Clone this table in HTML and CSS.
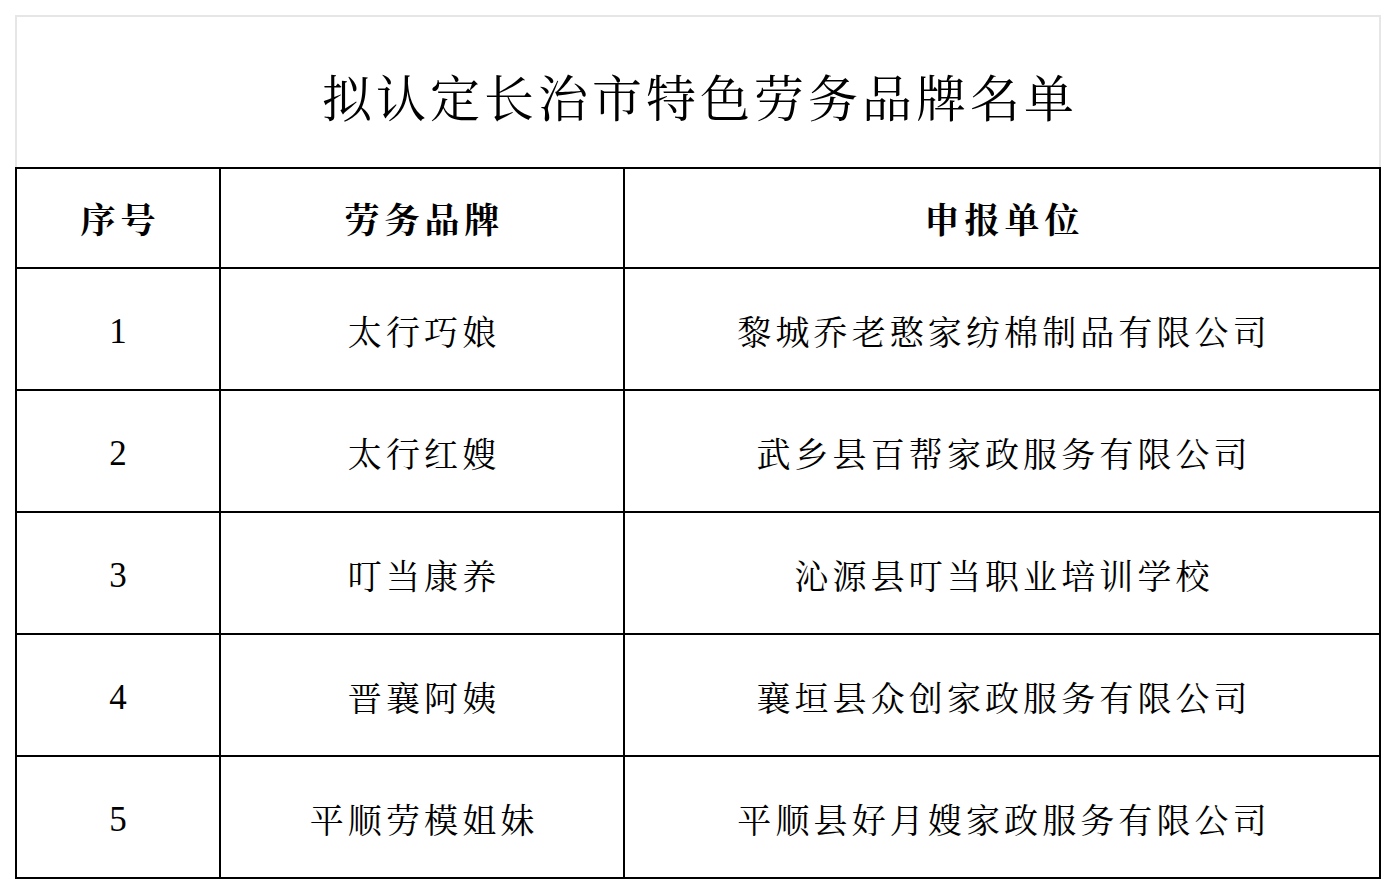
FILE: index.html
```html
<!DOCTYPE html>
<html lang="zh-CN">
<head>
<meta charset="utf-8">
<title>拟认定长治市特色劳务品牌名单</title>
<link rel="stylesheet" href="styles.css">
</head>
<body>
<div class="sheet">
  <div class="title"><span class="title-text">拟认定长治市特色劳务品牌名单</span></div>
  <div class="grid">
    <div class="cell head"><span class="ht">序号</span></div>
    <div class="cell head"><span class="ht">劳务品牌</span></div>
    <div class="cell head"><span class="ht">申报单位</span></div>

    <div class="cell num">1</div>
    <div class="cell"><span class="dt">太行巧娘</span></div>
    <div class="cell"><span class="dt">黎城乔老憨家纺棉制品有限公司</span></div>

    <div class="cell num">2</div>
    <div class="cell"><span class="dt">太行红嫂</span></div>
    <div class="cell"><span class="dt">武乡县百帮家政服务有限公司</span></div>

    <div class="cell num">3</div>
    <div class="cell"><span class="dt">叮当康养</span></div>
    <div class="cell"><span class="dt">沁源县叮当职业培训学校</span></div>

    <div class="cell num">4</div>
    <div class="cell"><span class="dt">晋襄阿姨</span></div>
    <div class="cell"><span class="dt">襄垣县众创家政服务有限公司</span></div>

    <div class="cell num">5</div>
    <div class="cell"><span class="dt">平顺劳模姐妹</span></div>
    <div class="cell"><span class="dt">平顺县好月嫂家政服务有限公司</span></div>
  </div>
</div>
</body>
</html>
```

FILE: styles.css
```css
html, body {
  margin: 0;
  padding: 0;
  background: #ffffff;
}

body {
  font-family: "Noto Serif CJK SC", "Noto Sans CJK SC", "Liberation Serif", serif;
  color: #000;
}

.sheet {
  margin: 15px 0 0 15px;
  width: 1366px;
}

.title {
  box-sizing: border-box;
  height: 152px;
  border: 2px solid #e6e6e6;
  border-bottom: none;
  display: flex;
  align-items: center;
  justify-content: center;
  padding-top: 6px;
}

.title-text {
  font-size: 50px;
  letter-spacing: 4px;
  margin-right: -4px;
  line-height: 1;
  font-weight: 400;
}

.grid {
  display: grid;
  grid-template-columns: 202px 402px 754px;
  grid-template-rows: 98px repeat(5, 120px);
  gap: 2px;
  padding: 2px;
  background: #000;
}

.cell {
  background: #fff;
  display: flex;
  align-items: center;
  justify-content: center;
}

.ht {
  font-size: 35px;
  font-weight: 700;
  letter-spacing: 5px;
  margin-right: -5px;
  line-height: 1;
}

.dt {
  font-size: 34px;
  letter-spacing: 4.1px;
  margin-right: -4.1px;
  line-height: 1;
  padding-top: 4px;
}

.num {
  font-family: "Liberation Serif", serif;
  font-size: 35px;
  padding-top: 6px;
}
```
